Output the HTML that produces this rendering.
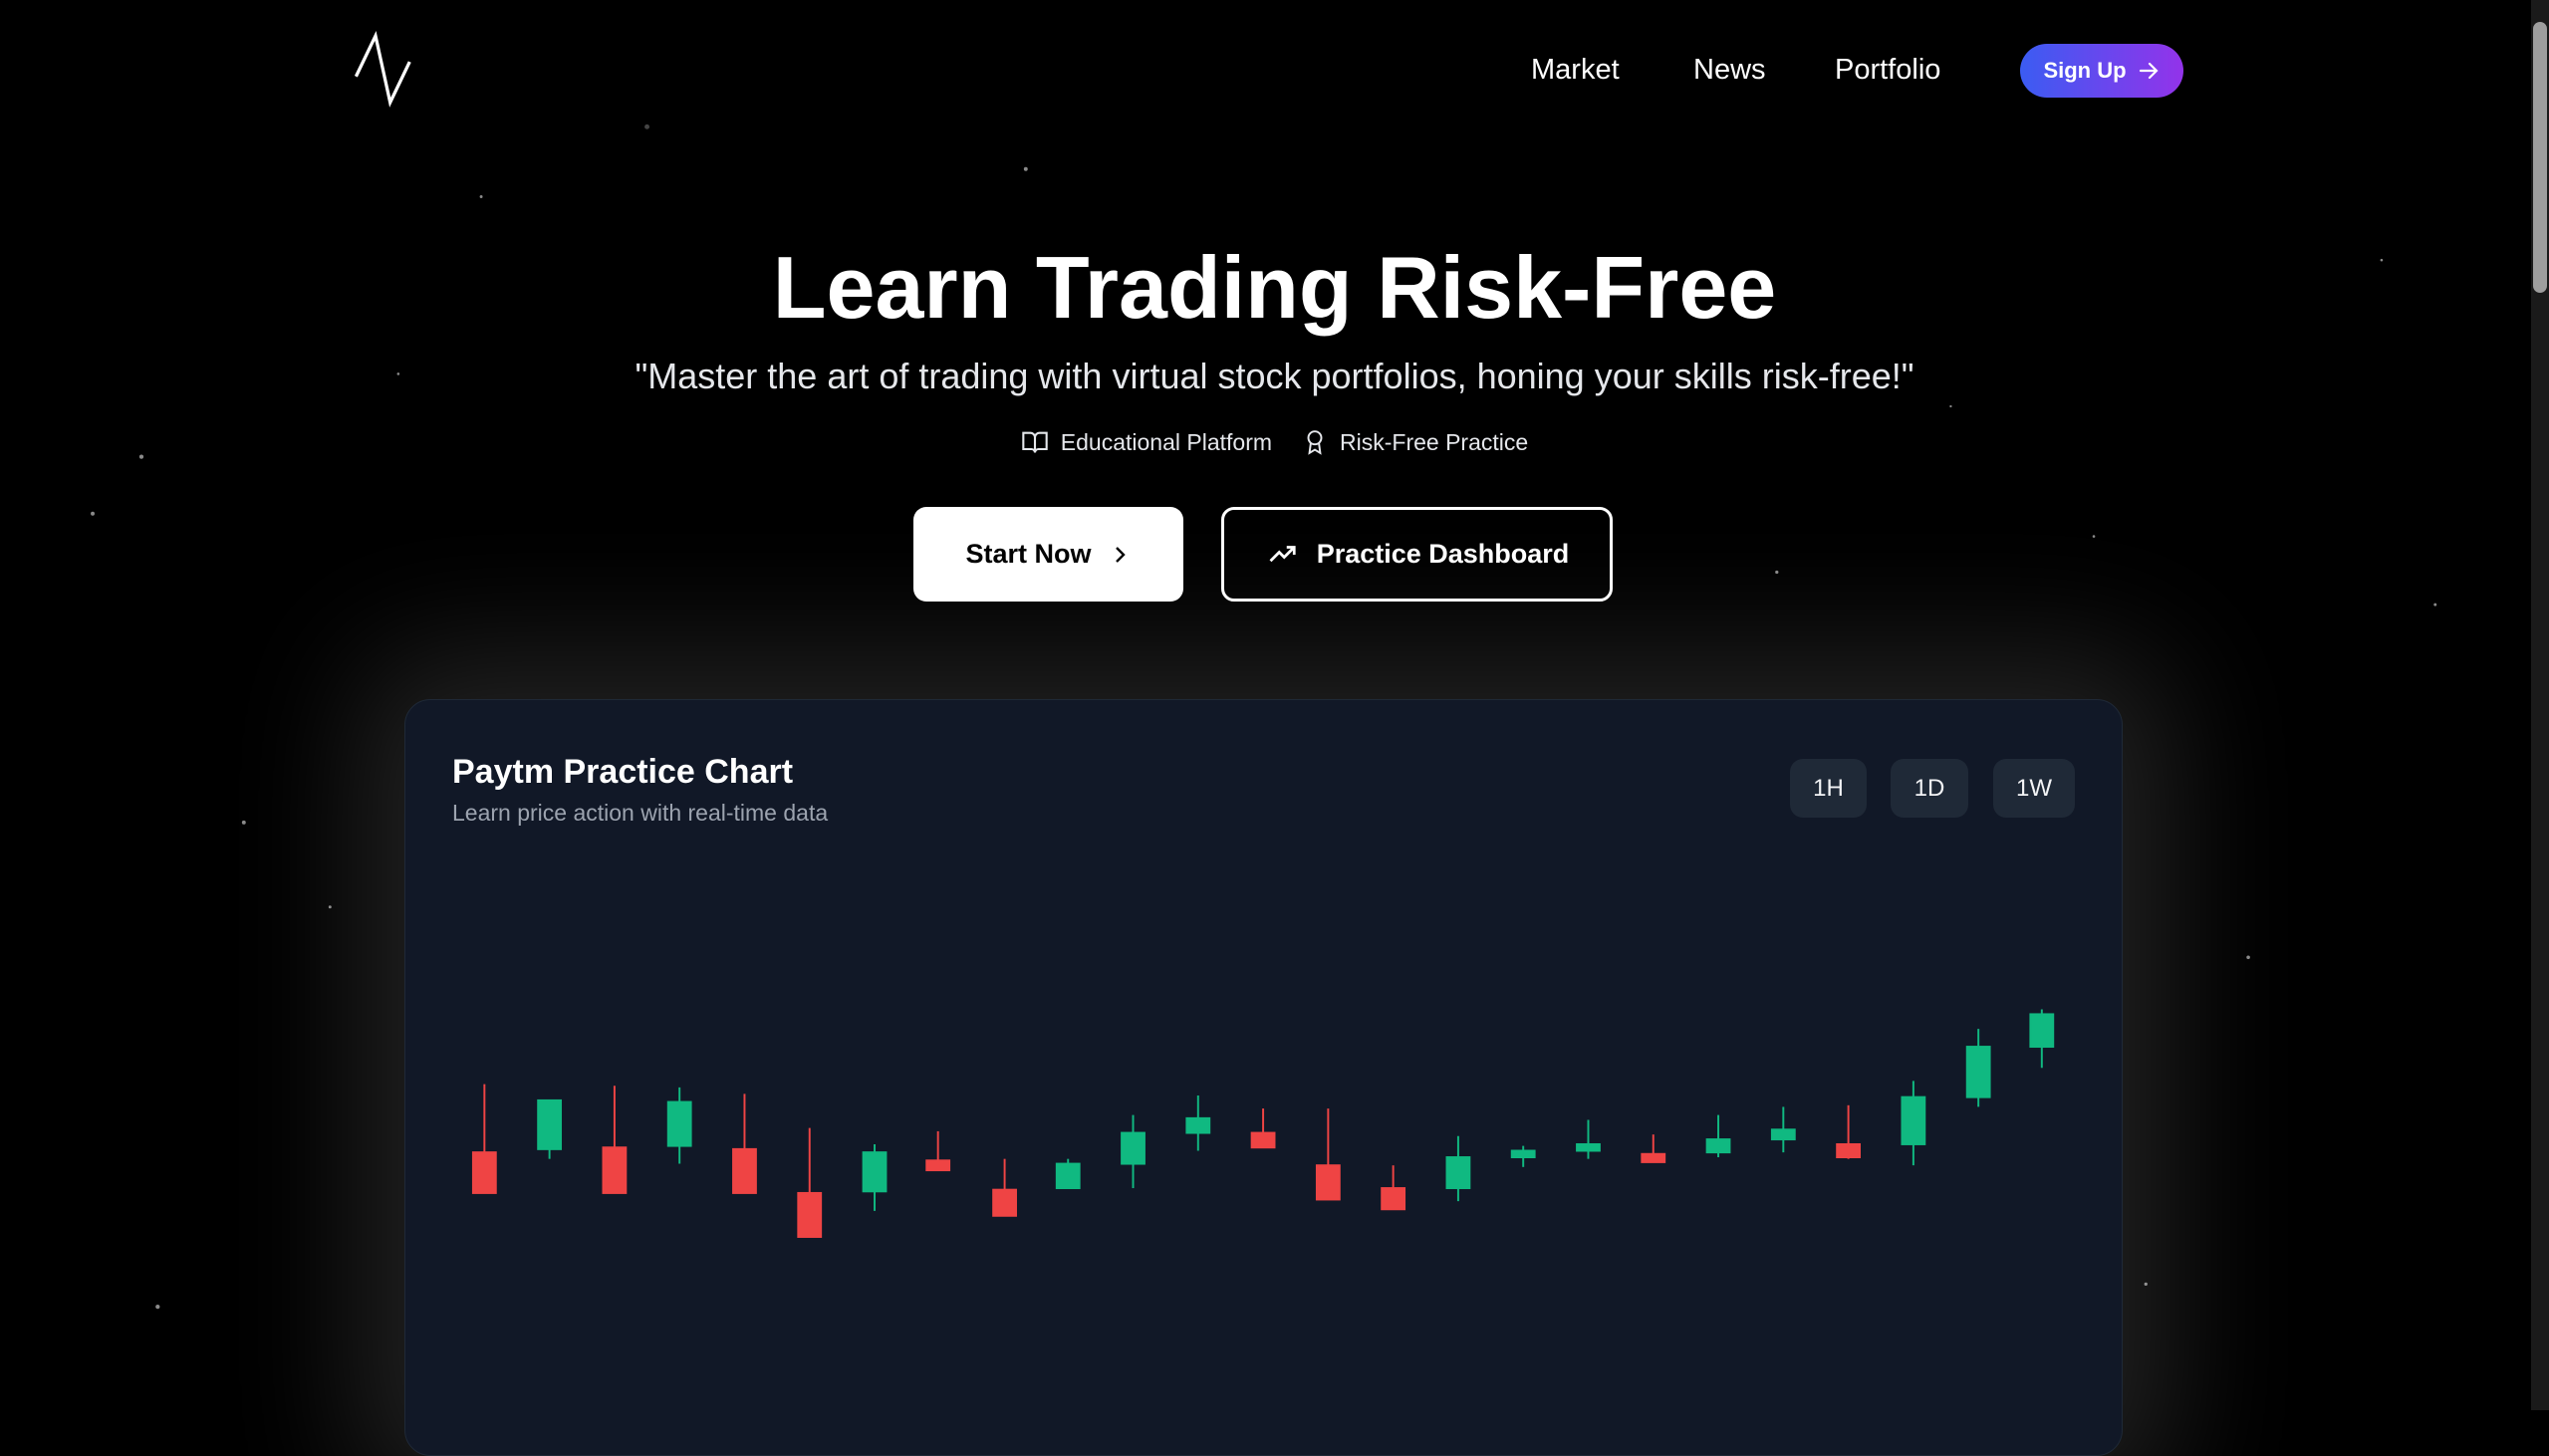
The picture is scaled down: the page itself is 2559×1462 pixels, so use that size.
<!DOCTYPE html>
<html><head><meta charset="utf-8"><style>
*{margin:0;padding:0;box-sizing:border-box}
html,body{width:2559px;height:1416px;overflow:hidden;background:#000;font-family:"Liberation Sans",sans-serif;color:#fff}
.abs{position:absolute}
.nav a{position:absolute;top:54px;font-size:29px;color:#fff;text-decoration:none}
.signup{left:2028px;top:44px;width:164px;height:54px;border-radius:27px;background:linear-gradient(90deg,#3b5cf2,#9333ea);font-size:22px;font-weight:bold;display:flex;align-items:center;justify-content:center;gap:10px}
h1{position:absolute;left:0;width:2559px;top:238px;text-align:center;font-size:88px;font-weight:bold}
.sub{left:0;width:2559px;top:357px;text-align:center;font-size:36px;color:#e5e7eb}
.badges{left:0;width:2559px;top:430px;display:flex;justify-content:center;gap:30px;font-size:23px;color:#e5e7eb;align-items:center}
.badges span{display:flex;align-items:center;gap:12px}
.btn{top:509px;height:95px;border-radius:13px;font-size:27px;font-weight:bold;display:flex;align-items:center;justify-content:center;gap:16px}
.card{left:406px;top:702px;width:1725px;height:760px;background:#111827;border:1px solid #1f2937;border-radius:26px;box-shadow:0 0 140px 50px rgba(255,255,255,0.13)}
.tf{top:762px;height:59px;background:#1f2937;border-radius:13px;font-size:24px;display:flex;align-items:center;justify-content:center;color:#f3f4f6}
</style></head><body>
<svg class="abs" style="left:0;top:0" width="2559" height="1416" viewBox="0 0 1568 867.6">
<g fill="#8a8a8a">
<circle cx="398" cy="78" r="1.5" fill="#444"/><circle cx="631" cy="104" r="1.2"/><circle cx="296" cy="121" r="0.9"/><circle cx="87" cy="281" r="1.3"/><circle cx="57" cy="316" r="1.2"/><circle cx="245" cy="230" r="0.8"/><circle cx="150" cy="506" r="1.2"/><circle cx="203" cy="558" r="0.9"/><circle cx="97" cy="804" r="1.3"/><circle cx="1093" cy="352" r="1"/><circle cx="1288" cy="330" r="0.8"/><circle cx="1383" cy="589" r="1.1"/><circle cx="1498" cy="372" r="0.9"/><circle cx="1320" cy="790" r="1"/><circle cx="1465" cy="160" r="0.8"/><circle cx="1200" cy="250" r="0.7"/></g>
<path d="M219 47 L231 22 L240 63 L252 38" fill="none" stroke="#fff" stroke-width="2"/>
</svg>
<div class="nav"><a style="left:1537px">Market</a><a style="left:1700px">News</a><a style="left:1842px">Portfolio</a></div>
<div class="abs signup">Sign Up <svg width="24" height="24" viewBox="0 0 24 24" fill="none" stroke="#fff" stroke-width="2.2" stroke-linecap="round"><path d="M4 12h15M13 5l7 7-7 7"/></svg></div>
<h1>Learn Trading Risk-Free</h1>
<div class="abs sub">"Master the art of trading with virtual stock portfolios, honing your skills risk-free!"</div>
<div class="abs badges"><span><svg width="28" height="28" viewBox="0 0 24 24" fill="none" stroke="#e5e7eb" stroke-width="1.8"><path d="M2 4h6a4 4 0 0 1 4 4v13a3 3 0 0 0-3-3H2zM22 4h-6a4 4 0 0 0-4 4v13a3 3 0 0 1 3-3h7z"/></svg>Educational Platform</span><span><svg width="26" height="28" viewBox="0 0 24 24" fill="none" stroke="#e5e7eb" stroke-width="1.8"><circle cx="12" cy="8" r="6"/><path d="M8.2 13L7 22l5-3 5 3-1.2-9"/></svg>Risk-Free Practice</span></div>
<div class="abs btn" style="left:917px;width:271px;background:#fff;color:#000">Start Now <svg width="24" height="24" viewBox="0 0 24 24" fill="none" stroke="#000" stroke-width="2.4"><path d="M9 5l7 7-7 7"/></svg></div>
<div class="abs btn" style="left:1226px;width:393px;border:3px solid #fff;color:#fff;background:#000"><svg width="36" height="30" viewBox="0 0 24 24" fill="none" stroke="#fff" stroke-width="2.2"><path d="M2 17l7-7 4 4 8-8M15 6h6v6"/></svg>Practice Dashboard</div>
<div class="abs card"></div>
<div class="abs" style="left:454px;top:756px;font-size:34px;font-weight:bold">Paytm Practice Chart</div>
<div class="abs" style="left:454px;top:803px;font-size:23px;color:#9ca3af">Learn price action with real-time data</div>
<div class="abs tf" style="left:1797px;width:77px">1H</div>
<div class="abs tf" style="left:1898px;width:78px">1D</div>
<div class="abs tf" style="left:2001px;width:82px">1W</div>
<svg class="abs" style="left:0;top:0" width="2559" height="1416" viewBox="0 0 1568 867.6">
<g stroke="#ef4444" fill="#ef4444" stroke-width="1.2">
<line x1="298" x2="298" y1="667" y2="734"/><rect x="291" y="709" width="14" height="25"/>
<line x1="378" x2="378" y1="668" y2="734"/><rect x="371" y="706" width="14" height="28"/>
<line x1="458" x2="458" y1="673" y2="734"/><rect x="451" y="707" width="14" height="27"/>
<line x1="498" x2="498" y1="694" y2="761"/><rect x="491" y="734" width="14" height="27"/>
<line x1="577" x2="577" y1="696" y2="720"/><rect x="570" y="714" width="14" height="6"/>
<line x1="618" x2="618" y1="713" y2="748"/><rect x="611" y="732" width="14" height="16"/>
<line x1="777" x2="777" y1="682" y2="706"/><rect x="770" y="697" width="14" height="9"/>
<line x1="817" x2="817" y1="682" y2="738"/><rect x="810" y="717" width="14" height="21"/>
<line x1="857" x2="857" y1="717" y2="744"/><rect x="850" y="731" width="14" height="13"/>
<line x1="1017" x2="1017" y1="698" y2="715"/><rect x="1010" y="710" width="14" height="5"/>
<line x1="1137" x2="1137" y1="680" y2="713"/><rect x="1130" y="704" width="14" height="8"/>
</g>
<g stroke="#10b981" fill="#10b981" stroke-width="1.2">
<line x1="338" x2="338" y1="677" y2="713"/><rect x="331" y="677" width="14" height="30"/>
<line x1="418" x2="418" y1="669" y2="716"/><rect x="411" y="678" width="14" height="27"/>
<line x1="538" x2="538" y1="704" y2="745"/><rect x="531" y="709" width="14" height="24"/>
<line x1="657" x2="657" y1="713" y2="731"/><rect x="650" y="716" width="14" height="15"/>
<line x1="697" x2="697" y1="686" y2="731"/><rect x="690" y="697" width="14" height="19"/>
<line x1="737" x2="737" y1="674" y2="708"/><rect x="730" y="688" width="14" height="9"/>
<line x1="897" x2="897" y1="699" y2="739"/><rect x="890" y="712" width="14" height="19"/>
<line x1="937" x2="937" y1="705" y2="718"/><rect x="930" y="708" width="14" height="4"/>
<line x1="977" x2="977" y1="689" y2="713"/><rect x="970" y="704" width="14" height="4"/>
<line x1="1057" x2="1057" y1="686" y2="712"/><rect x="1050" y="701" width="14" height="8"/>
<line x1="1097" x2="1097" y1="681" y2="709"/><rect x="1090" y="695" width="14" height="6"/>
<line x1="1177" x2="1177" y1="665" y2="717"/><rect x="1170" y="675" width="14" height="29"/>
<line x1="1217" x2="1217" y1="633" y2="681"/><rect x="1210" y="644" width="14" height="31"/>
<line x1="1256" x2="1256" y1="621" y2="657"/><rect x="1249" y="624" width="14" height="20"/>
</g>
</svg>
<div class="abs" style="left:2541px;top:0;width:18px;height:1416px;background:#1a1a1a"></div>
<div class="abs" style="left:2543px;top:22px;width:14px;height:272px;background:#9e9e9e;border-radius:7px"></div>
</body></html>
